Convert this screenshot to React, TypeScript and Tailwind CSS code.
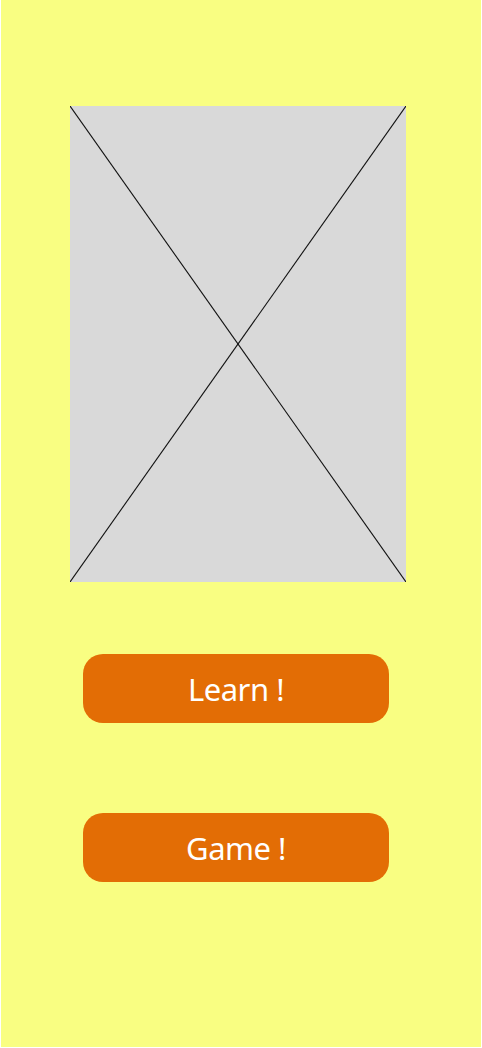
import React from "react";

export default function App() {
  return (
    <div className="w-[482px] h-[1048px] bg-white px-[1px] pb-[1px]">
      <div className="w-full h-full bg-[#f9fe82] flex flex-col items-start pt-[106px]">
        <div className="relative w-[336px] h-[476px] bg-[#d9d9d9] ml-[69px]">
          <svg className="absolute inset-0 w-full h-full" viewBox="0 0 336 476" preserveAspectRatio="none">
            <line x1="0" y1="0" x2="336" y2="476" stroke="#111" strokeWidth="1.1" />
            <line x1="336" y1="0" x2="0" y2="476" stroke="#111" strokeWidth="1.1" />
          </svg>
        </div>
        <button
          className="mt-[72px] ml-[82px] w-[306px] h-[69px] rounded-[20px] bg-[#e36d05] text-white text-[31px] tracking-[-0.5px] font-normal flex items-center justify-center pt-[2px]"
          style={{ fontFamily: '"Comic Sans MS", "Noto Sans", sans-serif' }}
        >
          Learn !
        </button>
        <button
          className="mt-[90px] ml-[82px] w-[306px] h-[69px] rounded-[20px] bg-[#e36d05] text-white text-[31px] tracking-[-0.5px] font-normal flex items-center justify-center pt-[2px]"
          style={{ fontFamily: '"Comic Sans MS", "Noto Sans", sans-serif' }}
        >
          Game !
        </button>
      </div>
    </div>
  );
}
